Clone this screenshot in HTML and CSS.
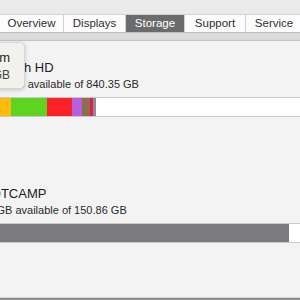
FILE: index.html
```html
<!DOCTYPE html>
<html>

<head>
  <title>Storage</title>
  <link rel="stylesheet" href="styles.css">
</head>

<body>
  <div class="window">
    <div class="toolbar">
      <div class="tabs">
        <div class="tab tab-overview">Overview</div>
        <div class="tab tab-displays">Displays</div>
        <div class="tab tab-storage selected">Storage</div>
        <div class="tab tab-support">Support</div>
        <div class="tab tab-service">Service</div>
      </div>
    </div>

    <div class="content">
      <div class="volume">
        <div class="volume-name">Macintosh HD</div>
        <div class="volume-info">636.02 GB available of 840.35 GB</div>
        <div class="bar">
          <div class="seg seg-apps"></div>
          <div class="seg seg-docs"></div>
          <div class="seg seg-photos"></div>
          <div class="seg seg-music"></div>
          <div class="seg seg-movies"></div>
          <div class="seg seg-backups"></div>
          <div class="seg seg-other"></div>
        </div>
      </div>

      <div class="volume volume-second">
        <div class="volume-name">BOOTCAMP</div>
        <div class="volume-info">4.22 GB available of 150.86 GB</div>
        <div class="bar">
          <div class="seg seg-used"></div>
        </div>
      </div>

      <div class="tooltip">
        <div class="tooltip-title">System</div>
        <div class="tooltip-value">12.31 GB</div>
      </div>
    </div>

    <div class="footer"></div>
  </div>
</body>

</html>
```

FILE: styles.css
```css
body {
  margin: 0;
  font-family: "Liberation Sans", Arial, sans-serif;
  background-color: #f3f3f3;
  overflow: hidden;
}

.window {
  width: 300px;
  height: 300px;
  display: flex;
  flex-direction: column;
  overflow: hidden;
}

.toolbar {
  height: 26px;
  padding-top: 14px;
  background: linear-gradient(#eaeaea 0, #eaeaea 14px, #dcdcdc 33px, #dadada 100%);
  border-bottom: 1px solid #c4c4c4;
}

.tabs {
  display: flex;
  gap: 1px;
  height: 19px;
  width: 310px;
  box-sizing: border-box;
  background-color: #cfcfcf;
  border-top: 1px solid #d2d2d2;
  border-bottom: 1px solid #bdbdbd;
}

.tab {
  flex-shrink: 0;
  background-color: #fcfcfc;
  color: #2f2f2f;
  font-size: 11.5px;
  line-height: 17px;
  text-align: center;
}

.tab.selected {
  background-color: #6b6b6b;
  color: #fff;
}

.tab-overview { width: 63px; }
.tab-displays { width: 61px; }
.tab-storage { width: 58px; }
.tab-support { width: 60px; }
.tab-service { width: 56px; }

.content {
  flex: 1;
  position: relative;
  padding-top: 19px;
  margin-left: -28px;
  color: #1c1c1c;
}

.volume-name {
  font-size: 13px;
  line-height: 16px;
}

.volume-info {
  margin-top: 1px;
  font-size: 11px;
  line-height: 14px;
  color: #2a2a2a;
}

.volume-second {
  margin-top: 69px;
}

.bar {
  display: flex;
  width: 380px;
  height: 18px;
  margin-top: 6px;
  border: 1px solid #c9c9c9;
  background-color: #fff;
}

.seg { height: 100%; }
.seg-apps { width: 38px; background-color: #fdbb0b; }
.seg-docs { width: 36px; background-color: #5ed421; }
.seg-photos { width: 25px; background-color: #fa2228; }
.seg-music { width: 10px; background-color: #b660e0; }
.seg-movies { width: 8px; background-color: #8f6f4b; }
.seg-backups { width: 3px; background-color: #e8185a; }
.seg-other { width: 3px; background-color: #8d8d8d; }
.seg-used { width: 316px; background-color: #7b7a7f; }

.tooltip {
  position: absolute;
  top: 1px;
  left: -32px;
  width: 85px;
  padding: 7px 14px 5px 0;
  box-sizing: border-box;
  text-align: right;
  background-color: #f2f1ed;
  border: 1px solid #d6d6d3;
  border-radius: 5px;
  box-shadow: 0 1px 4px rgba(0, 0, 0, 0.2);
}

.tooltip-title {
  font-size: 13px;
  line-height: 16px;
  color: #1c1c1c;
}

.tooltip-value {
  margin-top: 2px;
  font-size: 12px;
  line-height: 15px;
  color: #444;
}

.footer {
  height: 2px;
  border-top: 1px solid #d4d4d4;
  background-color: #8c8c8c;
}
```
